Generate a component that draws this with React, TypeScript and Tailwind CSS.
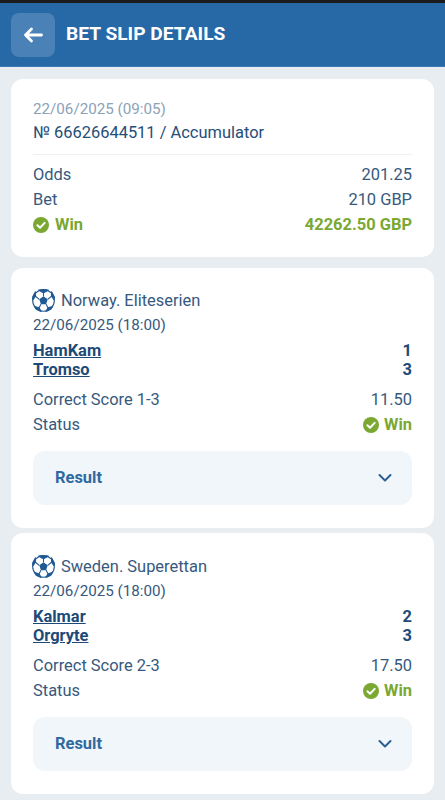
import React from "react";

const Check = ({ className = "" }: { className?: string }) => (
  <svg viewBox="0 0 16 16" className={className}>
    <circle cx="8" cy="8" r="8" fill="#7aa832" />
    <path d="M4.4 8.3 7 10.8 11.7 5.9" fill="none" stroke="#fff" strokeWidth="2" strokeLinecap="round" strokeLinejoin="round" />
  </svg>
);

const Ball = () => (
  <svg viewBox="0 0 24 24" className="w-[23px] h-[23px] shrink-0">
    <circle cx="12" cy="12" r="11.3" fill="#fff" stroke="#26568a" strokeWidth="1.1" />
    <path d="M12 7.6 16.4 10.8 14.7 16H9.3L7.6 10.8Z" fill="#1f5a96" />
    <path d="M7 1.2 12 3.8 17 1.2 12 .5ZM.8 11.5 3.6 7.6 3.6 3 .8 8ZM23.2 11.5 20.4 7.6 20.4 3 23.2 8ZM2.6 18.2 7.4 19.6 9.4 23.4 4.4 21.2ZM21.4 18.2 16.6 19.6 14.6 23.4 19.6 21.2Z" fill="#1f5a96" stroke="#1f5a96" strokeWidth="1.2" strokeLinejoin="round" />
    <path d="M12 3.8V7.6M7.6 10.8 3.6 7.6M16.4 10.8 20.4 7.6M9.3 16 7.4 19.6M14.7 16 16.6 19.6" fill="none" stroke="#26568a" strokeWidth="1.1" />
  </svg>
);

const Row = ({ left, right }: { left: string; right: string }) => (
  <div className="flex justify-between h-[25px] items-center">
    <span>{left}</span>
    <span>{right}</span>
  </div>
);

const Match = ({ league, home, away, hs, as: awayScore, market, odds, className }: { league: string; home: string; away: string; hs: number; as: number; market: string; odds: string; className: string }) => (
  <section className={`bg-white rounded-xl mx-[11px] px-[22px] pb-[23px] ${className}`}>
    <div className="flex items-center gap-[6px] h-[24px] ml-[-1px]">
      <Ball />
      <span className="translate-y-px">{league}</span>
    </div>
    <div className="h-[25px] leading-[25px] mt-[1px] text-[15.2px]">22/06/2025 (18:00)</div>
    <div className="font-bold text-[#1d4a77] mt-[3px]">
      <div className="flex justify-between h-[19px] leading-[19px]">
        <span className="underline">{home}</span>
        <span>{hs}</span>
      </div>
      <div className="flex justify-between h-[19px] leading-[19px]">
        <span className="underline">{away}</span>
        <span>{awayScore}</span>
      </div>
    </div>
    <div className="mt-[9px]">
      <Row left={market} right={odds} />
      <div className="flex justify-between h-[25px] items-center">
        <span>Status</span>
        <span className="flex items-center gap-[5px] font-bold text-[#7aa832]">
          <Check className="w-[16px] h-[16px]" />
          Win
        </span>
      </div>
    </div>
    <div className="mt-[13px] h-[54px] rounded-xl bg-[#f1f6fb] flex items-center justify-between pl-[22px] pr-[20px]">
      <span className="font-bold text-[#2f6a9f]">Result</span>
      <svg viewBox="0 0 14 10" className="w-[14px] h-[10px]">
        <path d="M1.5 2 7 7.5 12.5 2" fill="none" stroke="#2b5f92" strokeWidth="2" strokeLinecap="round" strokeLinejoin="round" />
      </svg>
    </div>
  </section>
);

export default function App() {
  return (
    <div className="w-[445px] h-[800px] overflow-hidden bg-[#e8edf2] text-[#37597d] text-[16.45px] font-['Roboto',sans-serif]">
      <div className="h-[3px] bg-[#1c1c1e]" />
      <header className="h-[64px] bg-[#2769a7] flex items-center pl-[11px] gap-[11px] border-b border-[#3f7ab2]">
        <div className="w-[44px] h-[44px] rounded-lg bg-[#4a81b6] flex items-center justify-center">
          <svg viewBox="0 0 20 16" className="w-[20px] h-[16px]">
            <path d="M18.5 8H2.5M8.5 2 2.5 8l6 6" fill="none" stroke="#fff" strokeWidth="2.8" strokeLinecap="round" strokeLinejoin="round" />
          </svg>
        </div>
        <h1 className="text-[19.2px] font-bold text-white">BET SLIP DETAILS</h1>
      </header>

      <section className="bg-white rounded-xl mx-[11px] mt-[12px] px-[22px] h-[178px] pt-[18px]">
        <div className="text-[#8ba2b8] text-[15.2px] h-[24px] leading-[24px]">22/06/2025 (09:05)</div>
        <div className="h-[24px] leading-[24px] text-[#264e78]">№ 66626644511 / Accumulator</div>
        <div className="border-t border-[#eef1f4] mt-[9px] pt-[8px]">
          <Row left="Odds" right="201.25" />
          <Row left="Bet" right="210 GBP" />
          <div className="flex justify-between h-[25px] items-center font-bold text-[#7aa832]">
            <span className="flex items-center gap-[6px]">
              <Check className="w-[16px] h-[16px]" />
              Win
            </span>
            <span>42262.50 GBP</span>
          </div>
        </div>
      </section>

      <Match className="mt-[11px] pt-[20px]" league="Norway. Eliteserien" home="HamKam" away="Tromso" hs={1} as={3} market="Correct Score 1-3" odds="11.50" />
      <Match className="mt-[5px] pt-[21px]" league="Sweden. Superettan" home="Kalmar" away="Orgryte" hs={2} as={3} market="Correct Score 2-3" odds="17.50" />
    </div>
  );
}
